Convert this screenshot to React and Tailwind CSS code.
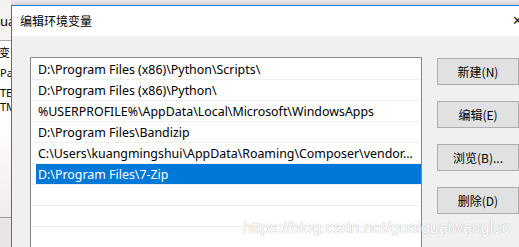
import React from "react";

const rows = [
  "D:\\Program Files (x86)\\Python\\Scripts\\",
  "D:\\Program Files (x86)\\Python\\",
  "%USERPROFILE%\\AppData\\Local\\Microsoft\\WindowsApps",
  "D:\\Program Files\\Bandizip",
  "C:\\Users\\kuangmingshui\\AppData\\Roaming\\Composer\\vendor...",
  "D:\\Program Files\\7-Zip",
  "",
  "",
  "",
];

const buttons = ["新建(N)", "编辑(E)", "浏览(B)...", "删除(D)"];

const font = "font-['Noto_Sans','Noto_Sans_CJK_SC',sans-serif]";

export default function App() {
  return (
    <div className={`w-[519px] h-[247px] overflow-hidden relative flex bg-[#f0f0f0] ${font} text-[12px] text-black`}>
      {/* background window sliver */}
      <div className="w-[11px] h-full flex flex-col shrink-0 overflow-hidden">
        <div className="h-[40px] bg-[#f3f3f3] pt-[13px] leading-[16px] text-[13px] whitespace-nowrap">ua</div>
        <div className="h-[177px] border-t border-[#a8a8a8] flex flex-col whitespace-nowrap text-[11px] leading-[13px] bg-gradient-to-b from-white via-white to-[#ececec]">
          <div className="pt-[5px] -ml-[1px]">变</div>
          <div className="pt-[7px]">Pa</div>
          <div className="pt-[7px]">TE</div>
          <div className="pt-[1px]">TM</div>
        </div>
        <div className="flex-1 bg-[#e6e6e6] border-t border-[#9a9a9a]"></div>
      </div>

      {/* right side */}
      <div className="flex-1 flex flex-col">
        <div className="h-[5px] bg-gradient-to-b from-[#ececec] to-[#d4d4d4] shrink-0"></div>
        <div className="flex-1 flex flex-col border-l border-t border-[#1a7fd4]">
          <div className="h-[30px] bg-white flex items-center pl-[8px] shrink-0 relative">
            <span className="text-[12px] font-['Noto_Sans_CJK_SC',sans-serif]">编辑环境变量</span>
            <span className="absolute right-[-4px] top-[7px] text-[13px] leading-[14px] text-[#222]">✕</span>
          </div>
          <div className="flex-1 flex pl-[18px] pt-[21px]">
            <div className="w-[392px] h-[230px] bg-white border border-[#828790] pt-[1px] pl-[1px] shrink-0">
              {rows.map((r, i) => {
                const sel = i === 5;
                return (
                  <div key={i} className="h-[21px] border-b border-[#efefef] flex">
                    <div className={`ml-[4px] flex-1 h-[20px] pl-[2px] leading-[21px] text-[12.4px] whitespace-nowrap overflow-hidden ${sel ? "bg-[#0078d7] text-white" : ""}`}>
                      {r}
                    </div>
                  </div>
                );
              })}
            </div>
            <div className="flex flex-col gap-[16px] pt-[1px] ml-[15px]">
              {buttons.map((b) => (
                <div key={b} className="w-[82px] h-[27px] bg-[#e1e1e1] border border-[#adadad] flex items-center justify-center whitespace-nowrap font-['Noto_Sans_CJK_SC',sans-serif]">
                  {b}
                </div>
              ))}
            </div>
          </div>
        </div>
      </div>

      {/* watermark */}
      <div className="absolute left-[243px] top-[219px] text-[16px] leading-[18px] text-white font-['Liberation_Sans',sans-serif] [text-shadow:0_0_1px_#9a9a9a] whitespace-nowrap">
        https://blog.csdn.net/guaiguaiwangluo
      </div>
    </div>
  );
}
